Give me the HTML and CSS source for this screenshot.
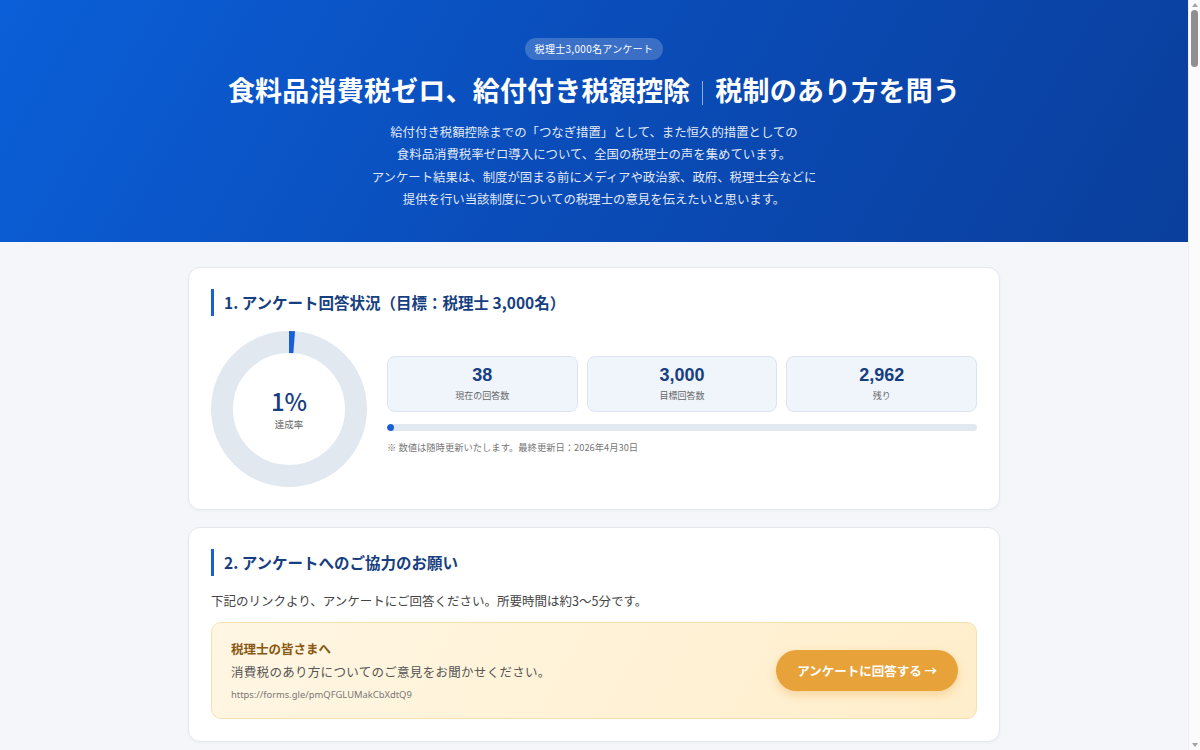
FILE: index.html
```html
<!DOCTYPE html>
<html lang="ja">
<head>
<meta charset="utf-8">
<title>税理士3,000名アンケート</title>
<link rel="stylesheet" href="styles.css">
</head>
<body>
<div class="page">
<header class="hero">
  <span class="badge">税理士3,000名アンケート</span>
  <h1 class="hero-title">食料品消費税ゼロ、給付付き税額控除<span class="sep"></span>税制のあり方を問う</h1>
  <p class="hero-text">給付付き税額控除までの「つなぎ措置」として、また恒久的措置としての<br>食料品消費税率ゼロ導入について、全国の税理士の声を集めています。<br>アンケート結果は、制度が固まる前にメディアや政治家、政府、税理士会などに<br>提供を行い当該制度についての税理士の意見を伝えたいと思います。</p>
</header>

<main class="container">
  <section class="card">
    <h2 class="card-title">1. アンケート回答状況（目標：税理士 3,000名）</h2>
    <div class="status">
      <div class="donut">
        <svg class="donut-svg" viewBox="0 0 156 156" width="156" height="156">
          <circle cx="78" cy="78" r="67" fill="none" stroke="#e2e8f0" stroke-width="22"/>
          <circle cx="78" cy="78" r="67" fill="none" stroke="#1a5fd6" stroke-width="22" stroke-dasharray="5.3 500" transform="rotate(-90 78 78)"/>
        </svg>
        <div class="donut-center">
          <div class="donut-value">1%</div>
          <div class="donut-label">達成率</div>
        </div>
      </div>
      <div class="status-right">
        <div class="stats">
          <div class="stat"><div class="stat-num">38</div><div class="stat-label">現在の回答数</div></div>
          <div class="stat"><div class="stat-num">3,000</div><div class="stat-label">目標回答数</div></div>
          <div class="stat"><div class="stat-num">2,962</div><div class="stat-label">残り</div></div>
        </div>
        <div class="bar"><div class="bar-fill" style="width:1.27%"></div></div>
        <p class="note"><span class="mark">※&#xFE0E;</span> 数値は随時更新いたします。最終更新日：2026年4月30日</p>
      </div>
    </div>
  </section>

  <section class="card">
    <h2 class="card-title">2. アンケートへのご協力のお願い</h2>
    <p class="lead">下記のリンクより、アンケートにご回答ください。所要時間は約3〜5分です。</p>
    <div class="cta">
      <div class="cta-text">
        <div class="cta-head">税理士の皆さまへ</div>
        <div class="cta-body">消費税のあり方についてのご意見をお聞かせください。</div>
        <div class="cta-url">https://forms.gle/pmQFGLUMakCbXdtQ9</div>
      </div>
      <a class="cta-btn" href="#">アンケートに回答する →</a>
    </div>
  </section>
</main>
</div>
<div class="scrollbar" aria-hidden="true">
  <span class="sb-arrow sb-up"></span>
  <span class="sb-thumb"></span>
  <span class="sb-arrow sb-down"></span>
</div>
</body>
</html>
```
FILE: styles.css
```css
html, body {
  margin: 0;
  padding: 0;
}
body {
  background: #f4f6fa;
  font-family: "Noto Sans CJK JP", "Noto Sans", sans-serif;
  color: #333;
}
.page {
  margin-right: 12px;
}
.scrollbar {
  position: fixed;
  top: 0;
  right: 0;
  width: 12px;
  height: 100vh;
  background: #fbfbfb;
  border-left: 1px solid #efefef;
  box-sizing: border-box;
  display: flex;
  flex-direction: column;
  align-items: center;
}
.sb-arrow {
  width: 0;
  height: 0;
  border-left: 3.5px solid transparent;
  border-right: 3.5px solid transparent;
}
.sb-up {
  margin-top: 3px;
  border-bottom: 4px solid #a3a3a3;
}
.sb-down {
  margin-top: auto;
  margin-bottom: 3px;
  border-top: 4px solid #a3a3a3;
}
.sb-thumb {
  margin-top: 3px;
  width: 7px;
  height: 57px;
  border-radius: 4px;
  background: #8f8f8f;
}
.hero {
  background: linear-gradient(120deg, #0b5fd8 0%, #0a4cb8 50%, #0a3f9c 100%);
  color: #fff;
  text-align: center;
  padding: 38px 20px 0;
  height: 242px;
  box-sizing: border-box;
}
.badge {
  display: block;
  width: fit-content;
  margin: 0 auto;
  background: rgba(255, 255, 255, 0.2);
  border-radius: 11px;
  font-size: 10px;
  line-height: 22px;
  height: 22px;
  padding: 0 10px;
  letter-spacing: 0.3px;
}
.hero-title {
  margin: 10px 0 0;
  font-size: 27px;
  font-weight: 700;
  line-height: 40px;
  letter-spacing: 0.2px;
}
.sep {
  display: inline-block;
  width: 1px;
  height: 24px;
  background: rgba(255, 255, 255, 0.55);
  margin: 0 12px;
  vertical-align: -4px;
}
.hero-text {
  margin: 11px 0 0;
  font-size: 12.4px;
  line-height: 22.4px;
  color: rgba(255, 255, 255, 0.9);
}
.container {
  max-width: 812px;
  margin: 25px auto 0;
  display: flex;
  flex-direction: column;
  gap: 17px;
  padding-bottom: 120px;
}
.card {
  background: #fff;
  border: 1px solid #e3e8ef;
  border-radius: 12px;
  padding: 21px 22px 22px;
  box-shadow: 0 1px 3px rgba(15, 40, 90, 0.04);
}
.card-title {
  margin: 0;
  border-left: 3px solid #1a5fd6;
  padding-left: 10px;
  font-size: 15.5px;
  line-height: 27px;
  font-weight: 700;
  color: #173f80;
}
.status {
  display: flex;
  align-items: center;
  gap: 20px;
  margin-top: 15px;
}
.donut {
  position: relative;
  width: 156px;
  height: 156px;
  flex: 0 0 156px;
}
.donut-svg {
  display: block;
}
.donut-center {
  position: absolute;
  inset: 0;
  display: flex;
  flex-direction: column;
  align-items: center;
  justify-content: center;
}
.donut-value {
  font-size: 24px;
  font-weight: 500;
  color: #173f80;
  line-height: 28px;
}
.donut-label {
  font-size: 9.5px;
  color: #666;
  margin-top: 2px;
}
.status-right {
  flex: 1;
  margin-bottom: 8px;
}
.stats {
  display: grid;
  grid-template-columns: repeat(3, 1fr);
  gap: 9px;
}
.stat {
  background: #f0f5fc;
  border: 1px solid #dbe5f2;
  border-radius: 8px;
  height: 56px;
  box-sizing: border-box;
  text-align: center;
  padding-top: 8px;
}
.stat-num {
  font-family: "Liberation Sans", Arial, sans-serif;
  font-weight: 700;
  font-size: 18px;
  line-height: 21px;
  color: #173f80;
}
.stat-label {
  font-size: 9px;
  color: #666;
  margin-top: 3px;
}
.bar {
  margin-top: 12px;
  height: 7px;
  border-radius: 4px;
  background: #e2e8f0;
  overflow: hidden;
}
.bar-fill {
  height: 100%;
  background: #1a5fd6;
  border-radius: 4px;
  min-width: 6px;
}
.note {
  margin: 9px 0 0;
  font-size: 9.3px;
  color: #777;
}
.mark {
  font-family: "Noto Sans CJK JP", sans-serif;
  color: #777;
}
.lead {
  margin: 15px 0 0;
  font-size: 12.5px;
  color: #444;
  line-height: 20px;
}
.cta {
  margin-top: 11px;
  display: flex;
  align-items: center;
  justify-content: space-between;
  background: linear-gradient(120deg, #fff6e3 0%, #ffeecb 100%);
  border: 1px solid #f6e0b0;
  border-radius: 10px;
  padding: 16px 18px 17px 19px;
}
.cta-head {
  font-size: 12.5px;
  font-weight: 700;
  color: #8a5812;
  line-height: 20px;
}
.cta-body {
  font-size: 12.5px;
  color: #555;
  margin-top: 3px;
  line-height: 20px;
  letter-spacing: 0.3px;
}
.cta-url {
  font-size: 9.4px;
  color: #777;
  margin-top: 6px;
  font-family: "Noto Sans", sans-serif;
}
.cta-btn {
  display: inline-block;
  background: #e8a23a;
  color: #fff;
  font-weight: 700;
  font-size: 12.5px;
  text-decoration: none;
  line-height: 41px;
  height: 41px;
  padding: 0 21px;
  border-radius: 21px;
  box-shadow: 0 4px 10px rgba(232, 162, 58, 0.35);
}
```
